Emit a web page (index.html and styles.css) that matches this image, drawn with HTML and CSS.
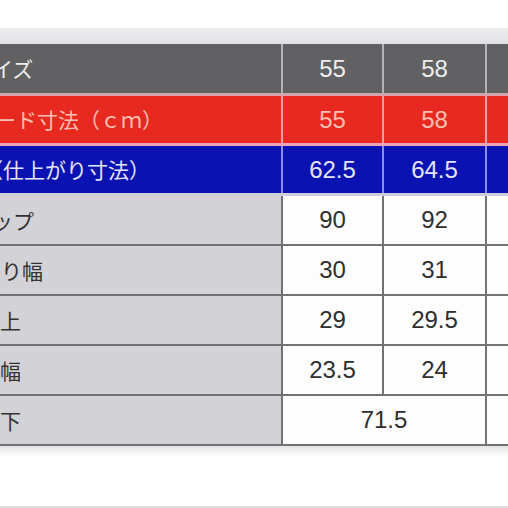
FILE: index.html
```html
<!DOCTYPE html>
<html lang="ja">
<head>
<meta charset="utf-8">
<link rel="stylesheet" href="styles.css">
</head>
<body>
<div class="sheet">
  <div class="topband"></div>
  <div class="row head gray">
    <div class="label"><span class="off-29">サイズ</span></div>
    <div class="num">55</div>
    <div class="num">58</div>
    <div class="num"></div>
  </div>
  <div class="sep sep-gr"></div>
  <div class="row head red">
    <div class="label"><span class="off-89">スタンダード寸法（ｃｍ）</span></div>
    <div class="num">55</div>
    <div class="num">58</div>
    <div class="num"></div>
  </div>
  <div class="sep sep-rb"></div>
  <div class="row head blue">
    <div class="label"><span class="off-18">（仕上がり寸法）</span></div>
    <div class="num">62.5</div>
    <div class="num">64.5</div>
    <div class="num"></div>
  </div>
  <div class="sep sep-bw"></div>
  <div class="body">
    <div class="row brow">
      <div class="label"><span class="off-29">ヒップ</span></div>
      <div class="num">90</div>
      <div class="num">92</div>
      <div class="num"></div>
    </div>
    <div class="row brow">
      <div class="label"><span class="off-41">わたり幅</span></div>
      <div class="num">30</div>
      <div class="num">31</div>
      <div class="num"></div>
    </div>
    <div class="row brow">
      <div class="label"><span class="off-21">股上</span></div>
      <div class="num">29</div>
      <div class="num">29.5</div>
      <div class="num"></div>
    </div>
    <div class="row brow">
      <div class="label"><span class="off-21">裾幅</span></div>
      <div class="num">23.5</div>
      <div class="num">24</div>
      <div class="num"></div>
    </div>
    <div class="row brow">
      <div class="label"><span class="off-21">股下</span></div>
      <div class="num span2">71.5</div>
      <div class="num"></div>
    </div>
  </div>
  <div class="bottomband"></div>
  <div class="footline"></div>
</div>
</body>
</html>
```

FILE: styles.css
```css
html, body {
  margin: 0;
  padding: 0;
  background: #ffffff;
  overflow: hidden;
}

.sheet {
  width: 508px;
  height: 508px;
  padding-top: 28px;
  box-sizing: border-box;
  display: flex;
  flex-direction: column;
  overflow: hidden;
}

.topband {
  height: 16px;
  background: linear-gradient(#ececef, #e1e1e5);
}

.row {
  display: grid;
  grid-template-columns: 281px 99px 101px 1fr;
  column-gap: 2px;
}

.head { height: 49px; }
.head.red, .head.blue { height: 47px; }

.label {
  display: flex;
  align-items: center;
  overflow: hidden;
  white-space: nowrap;
  font-family: "Noto Sans CJK JP", "Noto Sans", sans-serif;
  font-size: 21px;
  line-height: 1;
}

.num {
  display: flex;
  align-items: center;
  justify-content: center;
  font-family: "Liberation Sans", Arial, sans-serif;
  font-size: 24px;
  line-height: 1;
}

.span2 { grid-column: span 2; }

.off-18 { margin-left: -18px; }
.off-21 { margin-left: -21px; }
.off-29 { margin-left: -29px; }
.off-41 { margin-left: -41px; }
.off-89 { margin-left: -89px; }

.gray { background: #b4b4b8; }
.gray > div { background: #616163; color: #eeeeee; }

.red { background: #f0a0a4; }
.red > div { background: #e8291f; color: #f8c0b4; }

.blue { background: #8c8cf4; }
.blue > div { background: #0a12b2; color: #e4e4f4; }

.sep { height: 3px; }
.sep-gr { background: #d8a2aa; }
.sep-rb { background: #eea2b8; }
.sep-bw { background: #cfcfdc; }

.body {
  display: flex;
  flex-direction: column;
  row-gap: 2px;
  padding-bottom: 2px;
  background: #727272;
}

.brow {
  height: 48px;
  background: #727272;
}
.brow > div { background: #fdfdfd; color: #2e2e2e; }
.brow > .label { background: #d3d2d6; color: #333333; }

.bottomband {
  height: 11px;
  background: linear-gradient(#e4e4e8, #ffffff);
}

.footline {
  margin-top: auto;
  height: 2px;
  background: #dcdcdc;
}
```
